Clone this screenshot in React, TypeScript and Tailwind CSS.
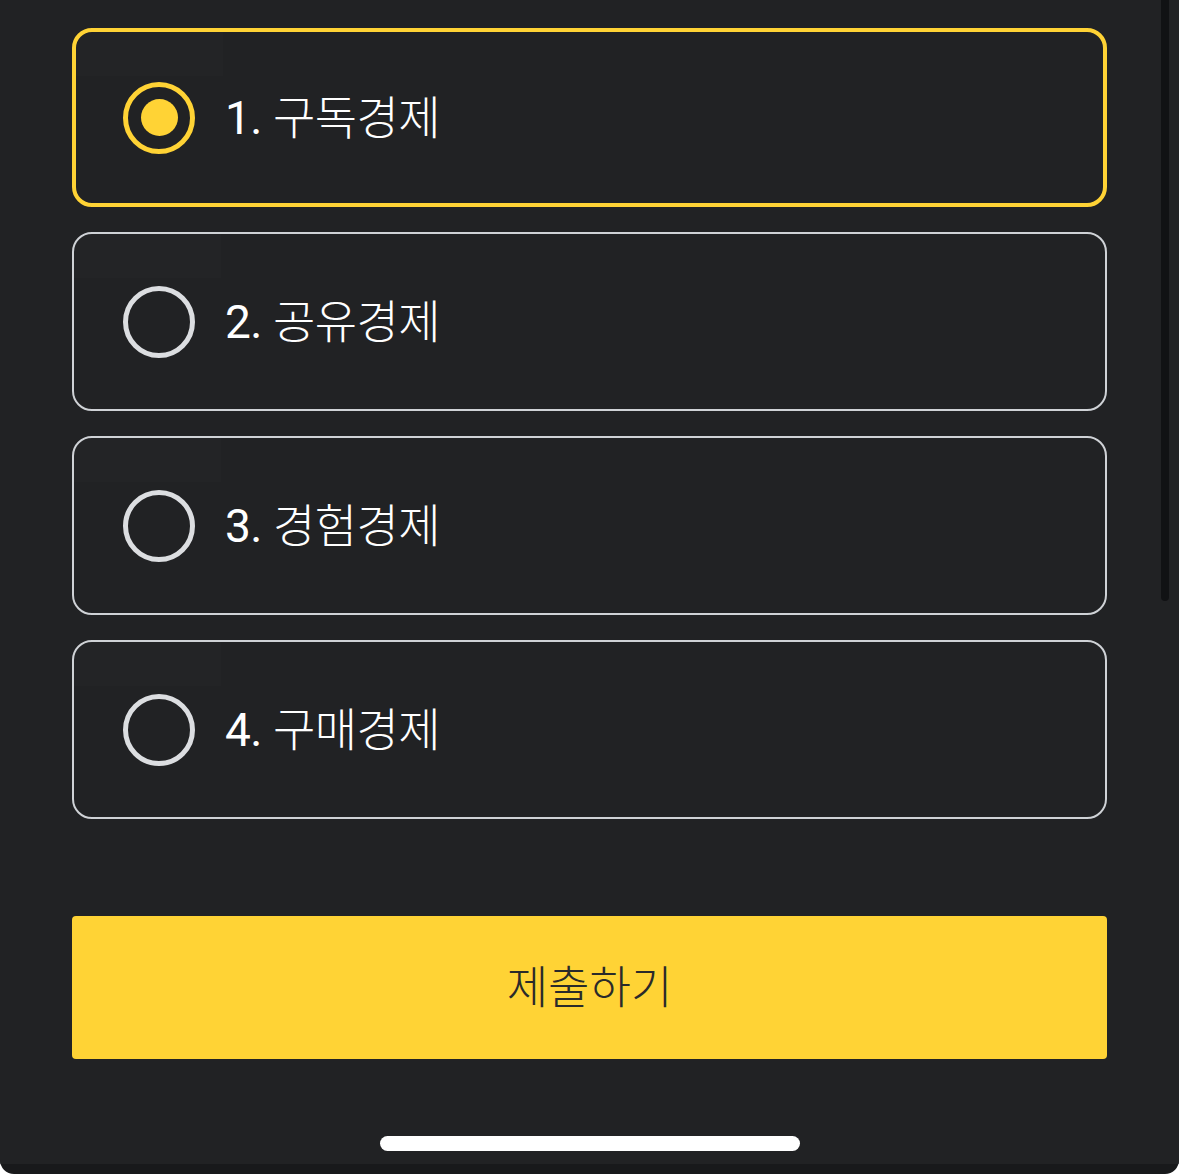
import React from 'react';

const options = [
  { num: '1.', label: '구독경제' },
  { num: '2.', label: '공유경제' },
  { num: '3.', label: '경험경제' },
  { num: '4.', label: '구매경제' },
];

const Radio = ({ checked }: { checked: boolean }) => (
  <div
    className={`w-[72px] h-[72px] rounded-full border-[5px] flex items-center justify-center shrink-0 ${
      checked ? 'border-[#ffd335]' : 'border-[#dcdee1]'
    }`}
  >
    {checked && <div className="w-[37px] h-[37px] rounded-full bg-[#ffd335]" />}
  </div>
);

export default function App() {
  const selected = 0;
  return (
    <div className="w-[1179px] h-[1174px] bg-white">
      <div className="relative w-full h-full bg-[#18191b] rounded-b-[14px] overflow-hidden flex flex-col">
        <div className="h-[1164px] bg-[#212224] flex flex-col px-[72px] pt-[28px]">
          {/* Options */}
          <div className="flex flex-col gap-[25px]">
            {options.map((o, i) => (
              <div
                key={o.num}
                className={`relative h-[179px] rounded-[20px] flex items-center gap-[30px] ${
                  i === selected ? 'border-[4px] border-[#ffd335] pl-[47px]' : 'border-2 border-[#cfd2d6] pl-[49px]'
                }`}
              >
                <div className="absolute left-0 top-0 w-[147px] h-[44px] bg-white/[0.012] rounded-tl-[18px]" />
                <Radio checked={i === selected} />
                <span
                  className="text-white text-[46px] leading-none tracking-[-0.5px]"
                  style={{ fontFamily: 'Roboto, "Noto Sans CJK KR", sans-serif' }}
                >
                  <span className="font-normal">{o.num} </span>
                  <span className="font-light">{o.label}</span>
                </span>
              </div>
            ))}
          </div>

          {/* Submit */}
          <button
            className="mt-[97px] h-[143px] w-full rounded-[4px] bg-[#ffd335] text-[#2a2a2a] text-[45px] font-light flex items-center justify-center pb-[6px]"
            style={{ fontFamily: '"Noto Sans CJK KR", sans-serif' }}
          >
            제출하기
          </button>

          {/* Home indicator */}
          <div className="mt-[77px] flex justify-center">
            <div className="w-[420px] h-[15px] rounded-full bg-white" />
          </div>
        </div>

        {/* Scrollbar */}
        <div className="absolute right-[10px] top-0 w-[8px] h-[601px] rounded-b-full bg-[#111214]" />
      </div>
    </div>
  );
}
